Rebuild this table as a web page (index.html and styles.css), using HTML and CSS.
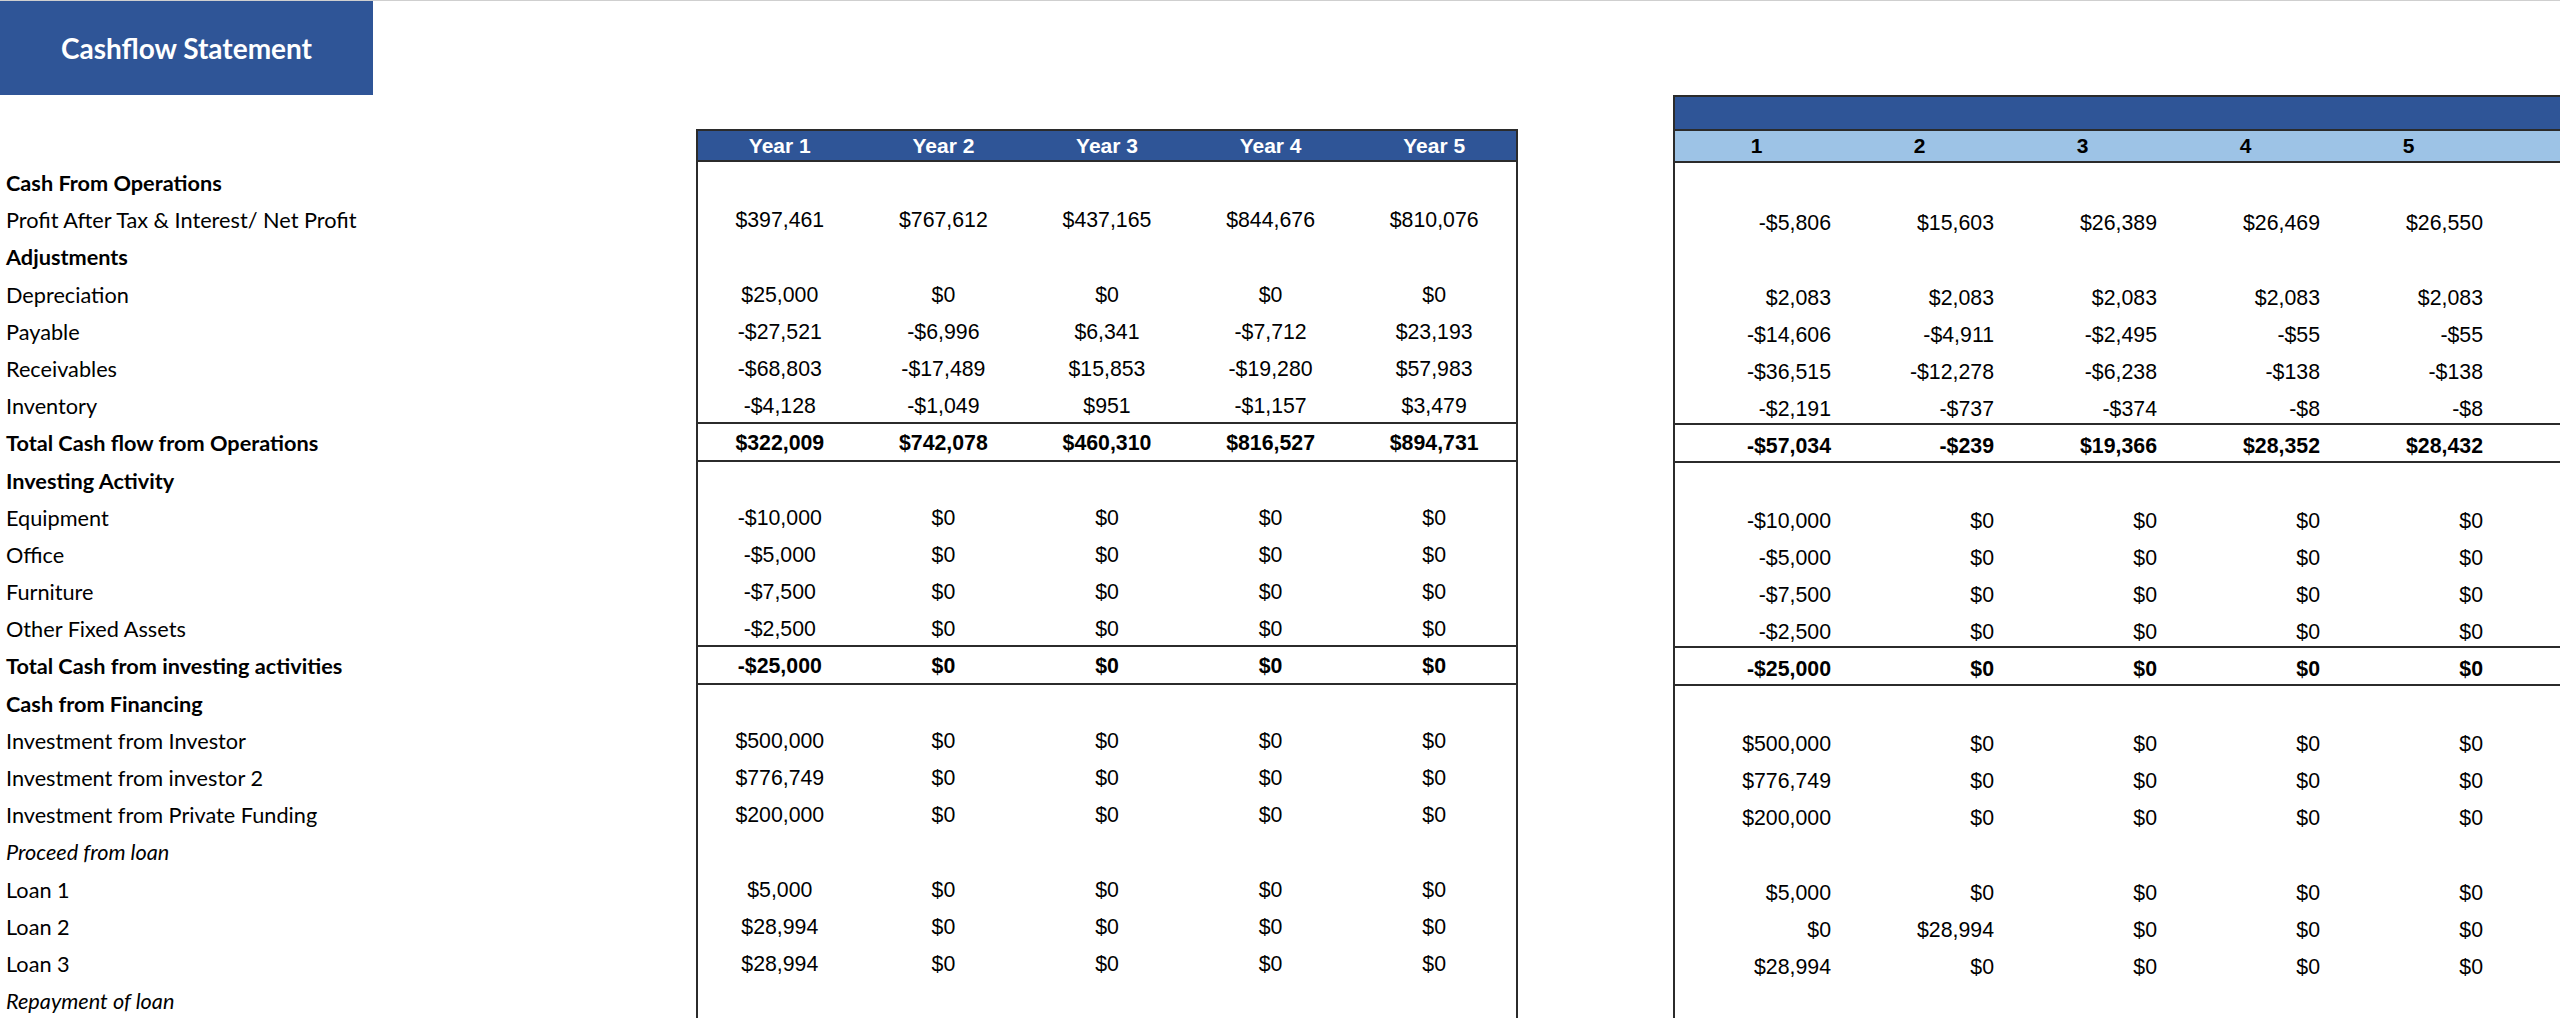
FILE: index.html
```html
<!DOCTYPE html>
<html lang="en">
<head>
<meta charset="utf-8">
<title>Cashflow Statement</title>
<link rel="stylesheet" href="styles.css">
</head>
<body>
<div class="topline"></div>
<div class="titlebar">Cashflow Statement</div>
<div class="sheet">
  <div class="labels">
    <div class="lrow b">Cash From Operations</div>
    <div class="lrow">Profit After Tax &amp; Interest/ Net Profit</div>
    <div class="lrow b">Adjustments</div>
    <div class="lrow">Depreciation</div>
    <div class="lrow">Payable</div>
    <div class="lrow">Receivables</div>
    <div class="lrow">Inventory</div>
    <div class="lrow b">Total Cash flow from Operations</div>
    <div class="lrow b">Investing Activity</div>
    <div class="lrow">Equipment</div>
    <div class="lrow">Office</div>
    <div class="lrow">Furniture</div>
    <div class="lrow">Other Fixed Assets</div>
    <div class="lrow b">Total Cash from investing activities</div>
    <div class="lrow b">Cash from Financing</div>
    <div class="lrow">Investment from Investor</div>
    <div class="lrow">Investment from investor 2</div>
    <div class="lrow">Investment from Private Funding</div>
    <div class="lrow i">Proceed from loan</div>
    <div class="lrow">Loan 1</div>
    <div class="lrow">Loan 2</div>
    <div class="lrow">Loan 3</div>
    <div class="lrow i">Repayment of loan</div>
  </div>

  <div class="ltable">
    <div class="lhead"><span>Year 1</span><span>Year 2</span><span>Year 3</span><span>Year 4</span><span>Year 5</span></div>
    <div class="row"></div>
    <div class="row"><span>$397,461</span><span>$767,612</span><span>$437,165</span><span>$844,676</span><span>$810,076</span></div>
    <div class="row"></div>
    <div class="row"><span>$25,000</span><span>$0</span><span>$0</span><span>$0</span><span>$0</span></div>
    <div class="row"><span>-$27,521</span><span>-$6,996</span><span>$6,341</span><span>-$7,712</span><span>$23,193</span></div>
    <div class="row"><span>-$68,803</span><span>-$17,489</span><span>$15,853</span><span>-$19,280</span><span>$57,983</span></div>
    <div class="row"><span>-$4,128</span><span>-$1,049</span><span>$951</span><span>-$1,157</span><span>$3,479</span></div>
    <div class="row tot"><span>$322,009</span><span>$742,078</span><span>$460,310</span><span>$816,527</span><span>$894,731</span></div>
    <div class="row"></div>
    <div class="row"><span>-$10,000</span><span>$0</span><span>$0</span><span>$0</span><span>$0</span></div>
    <div class="row"><span>-$5,000</span><span>$0</span><span>$0</span><span>$0</span><span>$0</span></div>
    <div class="row"><span>-$7,500</span><span>$0</span><span>$0</span><span>$0</span><span>$0</span></div>
    <div class="row"><span>-$2,500</span><span>$0</span><span>$0</span><span>$0</span><span>$0</span></div>
    <div class="row tot"><span>-$25,000</span><span>$0</span><span>$0</span><span>$0</span><span>$0</span></div>
    <div class="row"></div>
    <div class="row"><span>$500,000</span><span>$0</span><span>$0</span><span>$0</span><span>$0</span></div>
    <div class="row"><span>$776,749</span><span>$0</span><span>$0</span><span>$0</span><span>$0</span></div>
    <div class="row"><span>$200,000</span><span>$0</span><span>$0</span><span>$0</span><span>$0</span></div>
    <div class="row"></div>
    <div class="row"><span>$5,000</span><span>$0</span><span>$0</span><span>$0</span><span>$0</span></div>
    <div class="row"><span>$28,994</span><span>$0</span><span>$0</span><span>$0</span><span>$0</span></div>
    <div class="row"><span>$28,994</span><span>$0</span><span>$0</span><span>$0</span><span>$0</span></div>
    <div class="row"></div>
  </div>

  <div class="gap"></div>

  <div class="rtable">
    <div class="rband"></div>
    <div class="rhead"><span>1</span><span>2</span><span>3</span><span>4</span><span>5</span><span></span></div>
    <div class="row"></div>
    <div class="row"><span>-$5,806</span><span>$15,603</span><span>$26,389</span><span>$26,469</span><span>$26,550</span></div>
    <div class="row"></div>
    <div class="row"><span>$2,083</span><span>$2,083</span><span>$2,083</span><span>$2,083</span><span>$2,083</span></div>
    <div class="row"><span>-$14,606</span><span>-$4,911</span><span>-$2,495</span><span>-$55</span><span>-$55</span></div>
    <div class="row"><span>-$36,515</span><span>-$12,278</span><span>-$6,238</span><span>-$138</span><span>-$138</span></div>
    <div class="row"><span>-$2,191</span><span>-$737</span><span>-$374</span><span>-$8</span><span>-$8</span></div>
    <div class="row tot"><span>-$57,034</span><span>-$239</span><span>$19,366</span><span>$28,352</span><span>$28,432</span></div>
    <div class="row"></div>
    <div class="row"><span>-$10,000</span><span>$0</span><span>$0</span><span>$0</span><span>$0</span></div>
    <div class="row"><span>-$5,000</span><span>$0</span><span>$0</span><span>$0</span><span>$0</span></div>
    <div class="row"><span>-$7,500</span><span>$0</span><span>$0</span><span>$0</span><span>$0</span></div>
    <div class="row"><span>-$2,500</span><span>$0</span><span>$0</span><span>$0</span><span>$0</span></div>
    <div class="row tot"><span>-$25,000</span><span>$0</span><span>$0</span><span>$0</span><span>$0</span></div>
    <div class="row"></div>
    <div class="row"><span>$500,000</span><span>$0</span><span>$0</span><span>$0</span><span>$0</span></div>
    <div class="row"><span>$776,749</span><span>$0</span><span>$0</span><span>$0</span><span>$0</span></div>
    <div class="row"><span>$200,000</span><span>$0</span><span>$0</span><span>$0</span><span>$0</span></div>
    <div class="row"></div>
    <div class="row"><span>$5,000</span><span>$0</span><span>$0</span><span>$0</span><span>$0</span></div>
    <div class="row"><span>$0</span><span>$28,994</span><span>$0</span><span>$0</span><span>$0</span></div>
    <div class="row"><span>$28,994</span><span>$0</span><span>$0</span><span>$0</span><span>$0</span></div>
    <div class="row"></div>
  </div>
</div>
</body>
</html>
```

FILE: styles.css
```css
* { box-sizing: border-box; }
html, body { margin: 0; padding: 0; }
body {
  width: 2560px;
  height: 1022px;
  overflow: hidden;
  background: #ffffff;
  color: #000000;
  font-family: "Liberation Sans", Arial, sans-serif;
}
.topline { height: 1px; background: #cfcfcf; }
.titlebar {
  width: 373px;
  height: 94px;
  background: #2f5597;
  color: #ffffff;
  display: flex;
  align-items: center;
  justify-content: center;
  font-family: Lato, "Liberation Sans", sans-serif;
  font-weight: 700;
  font-size: 28px;
}
.sheet { display: flex; align-items: stretch; }

.labels {
  width: 696px;
  flex: none;
  padding-top: 67px;
  font-family: Lato, "Liberation Sans", sans-serif;
  font-size: 21.7px;
}
.lrow {
  height: 37.2px;
  padding: 6px 0 0 6px;
  line-height: 30px;
  white-space: nowrap;
}
.b { font-weight: 700; }
.i { font-style: italic; }

.ltable {
  width: 822px;
  flex: none;
  margin-top: 34px;
  border-left: 2px solid #2b2b2b;
  border-right: 2px solid #2b2b2b;
}
.lhead {
  height: 33px;
  background: #2f5597;
  border-top: 2px solid #2b2b2b;
  border-bottom: 2px solid #2b2b2b;
  display: flex;
  color: #ffffff;
  font-weight: 700;
  font-size: 21px;
}
.lhead span { flex: 1; text-align: center; line-height: 29px; }

.row {
  height: 37.2px;
  display: flex;
  font-size: 21.3px;
  line-height: 30px;
  white-space: nowrap;
}
.row.tot {
  font-weight: 700;
  box-shadow: inset 0 2px 0 #2b2b2b, 0 2px 0 #2b2b2b;
}
.ltable .row span { flex: 1; text-align: center; padding-top: 6px; }

.gap { width: 155px; flex: none; }

.rtable {
  flex: 1;
  min-width: 0;
  border-left: 2px solid #2b2b2b;
  overflow: hidden;
}
.rband {
  height: 34px;
  background: #2f5597;
  border-top: 2px solid #2b2b2b;
}
.rhead {
  height: 34px;
  background: #9dc3e6;
  border-top: 2px solid #2b2b2b;
  border-bottom: 2px solid #2b2b2b;
  display: flex;
  font-weight: 700;
  font-size: 21px;
}
.rhead span { width: 163px; flex: none; text-align: center; line-height: 30px; }
.rtable .row span { width: 163px; flex: none; text-align: right; padding: 8px 7px 0 0; }
```
